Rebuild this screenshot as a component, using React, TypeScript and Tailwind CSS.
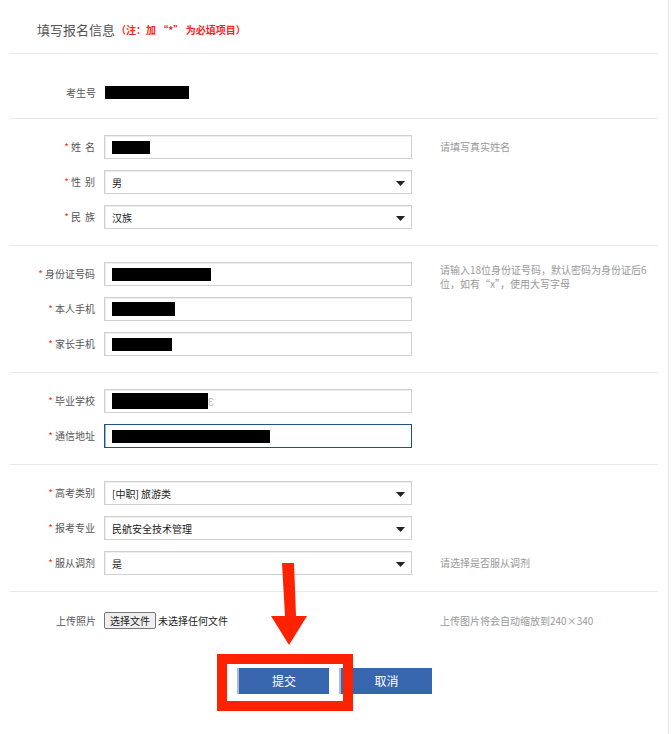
import React from "react";

const font = { fontFamily: '"Noto Sans CJK SC", "Liberation Sans", sans-serif' };

function Redact({ w, h = 14 }: { w: number; h?: number }) {
  return <span className="inline-block bg-black" style={{ width: w, height: h }} />;
}

function Caret() {
  return (
    <svg width="9" height="5" viewBox="0 0 9 5" className="absolute right-[6px] top-[10px]">
      <polygon points="0,0 9,0 4.5,5" fill="#222" />
    </svg>
  );
}

type RowProps = {
  label: string;
  required?: boolean;
  spaced?: boolean;
  children?: React.ReactNode;
  select?: boolean;
  focus?: boolean;
  hint?: React.ReactNode;
  twoLineHint?: boolean;
};

function Row({ label, required = true, spaced, children, select, focus, hint, twoLineHint }: RowProps) {
  return (
    <div className="flex items-center h-[24px]">
      <div className="w-[86px] pr-[1px] text-right text-[10px] text-[#555] leading-none">
        {required && <span className="text-[#e33] mr-[2px]">*</span>}
        <span className={spaced ? "tracking-[4px] -mr-[4px]" : ""}>{label}</span>
      </div>
      <div
        className={
          "relative ml-[8px] w-[308px] h-[24px] flex items-center pl-[7px] text-[10px] text-[#222] bg-white border " +
          (focus
            ? "border-[#1d4f91] shadow-[inset_1px_0_0_#9fb3d3]"
            : "border-[#d0d0d0] shadow-[inset_1px_1px_0_#eee]")
        }
      >
        {children}
        {select && <Caret />}
      </div>
      {hint && (
        <div
          className={
            "ml-[28px] w-[210px] text-[10px] text-[#999] " +
            (twoLineHint ? "self-start h-[24px] leading-[14px] pt-[1px] overflow-visible" : "leading-none")
          }
        >
          {hint}
        </div>
      )}
    </div>
  );
}

function Section({ children, className = "" }: { children: React.ReactNode; className?: string }) {
  return (
    <div className={"border-t border-[#e8e8e8] py-[16px] flex flex-col gap-[11px] " + className}>{children}</div>
  );
}

export default function App() {
  return (
    <div className="relative w-[671px] h-[734px] bg-white overflow-hidden" style={font}>
      <div className="w-[669px] h-full border-r border-[#e6e6e6] pl-[10px] pr-[10px]">
        {/* header */}
        <div className="h-[53px] flex items-center pl-[27px] pt-[6px]">
          <span className="text-[13px] text-[#555]">填写报名信息</span>
          <span className="text-[10px] font-bold text-[#f22] ml-[1px]">（注：加 “*” 为必填项目）</span>
        </div>

        {/* exam number */}
        <div className="border-t border-[#e8e8e8] h-[65px] flex items-center pt-[12px]">
          <div className="w-[86px] text-right text-[10px] text-[#555]">考生号</div>
          <div className="ml-[9px] flex items-center">
            <Redact w={84} h={13} />
          </div>
        </div>

        <Section>
          <Row label="姓名" spaced hint="请填写真实姓名">
            <Redact w={38} h={13} />
          </Row>
          <Row label="性别" spaced select>
            男
          </Row>
          <Row label="民族" spaced select>
            汉族
          </Row>
        </Section>

        <Section>
          <Row
            label="身份证号码"
            twoLineHint
            hint="请输入18位身份证号码，默认密码为身份证后6位，如有“x”，使用大写字母"
          >
            <Redact w={99} h={13} />
          </Row>
          <Row label="本人手机">
            <Redact w={63} h={14} />
          </Row>
          <Row label="家长手机">
            <Redact w={60} h={13} />
          </Row>
        </Section>

        <Section>
          <Row label="毕业学校">
            <Redact w={96} h={16} />
            <span className="text-[#bbb]">Ɛ</span>
          </Row>
          <Row label="通信地址" focus>
            <Redact w={158} h={13} />
          </Row>
        </Section>

        <Section>
          <Row label="高考类别" select>
            [中职] 旅游类
          </Row>
          <Row label="报考专业" select>
            民航安全技术管理
          </Row>
          <Row label="服从调剂" select hint="请选择是否服从调剂">
            是
          </Row>
        </Section>

        {/* upload */}
        <div className="border-t border-[#e8e8e8] pt-[20px]">
          <div className="flex items-center h-[17px]">
            <div className="w-[86px] text-right text-[10px] text-[#555]">上传照片</div>
            <div className="ml-[8px] w-[308px] flex items-center text-[10px] text-[#222]">
              <span className="h-[17px] px-[5px] flex items-center bg-[#efefef] border border-[#777] rounded-[2px]">
                选择文件
              </span>
              <span className="ml-[2px]">未选择任何文件</span>
            </div>
            <div className="ml-[28px] text-[10px] text-[#999]">上传图片将会自动缩放到240×340</div>
          </div>

          <div className="flex mt-[39px] pl-[227px] gap-[10px]">
            <button className="w-[92px] h-[26px] bg-[#3866ae] border-l-2 border-[#a9bbdc] text-white text-[12px]">
              提交
            </button>
            <button className="w-[93px] h-[26px] bg-[#3866ae] border-l-2 border-[#a9bbdc] text-white text-[12px]">
              取消
            </button>
          </div>
        </div>
      </div>

      {/* highlight overlay */}
      <div className="absolute left-[217px] top-[654px] w-[136px] h-[57px] border-[10px] border-[#ff2200]" />
      <svg className="absolute left-0 top-0 pointer-events-none" width="671" height="734">
        <polygon points="282,563 294,563 296,616 307,616 289,645 271,616 285,616" fill="#ff2200" />
      </svg>
    </div>
  );
}
